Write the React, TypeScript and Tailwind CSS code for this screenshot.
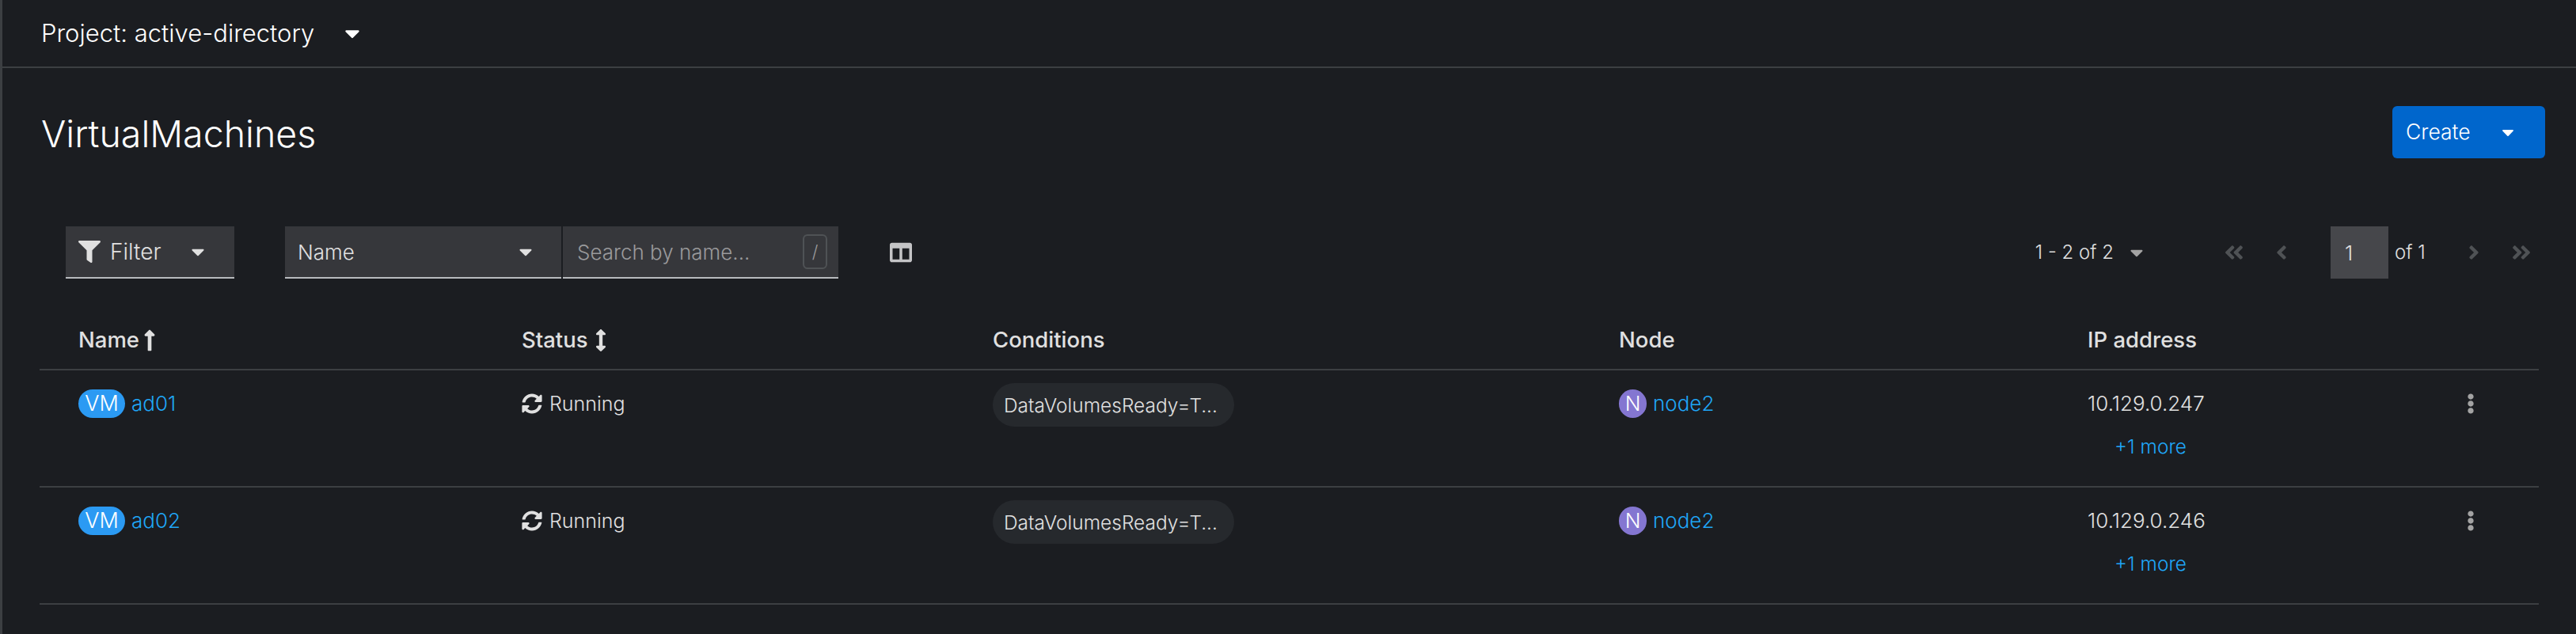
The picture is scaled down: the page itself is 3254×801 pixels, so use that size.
import { FaArrowsAltV, FaCaretDown, FaAngleDoubleLeft, FaAngleDoubleRight, FaAngleLeft, FaAngleRight, FaColumns, FaEllipsisV, FaFilter, FaLongArrowAltUp, FaSyncAlt } from 'react-icons/fa';

const COLUMNS = 'grid grid-cols-[560px_595px_791px_592px_1fr]';

const VMS = [
  { name: 'ad01', ip: '10.129.0.247' },
  { name: 'ad02', ip: '10.129.0.246' },
];

function VmRow({ name, ip }: { name: string; ip: string }) {
  return (
    <div className={`${COLUMNS} h-[148px] border-b-2 border-[#3c3f42] text-[26px] font-light leading-[36px] text-[#e0e0e0]`}>
      <div className="flex items-start pl-[49px] pt-6">
        <span className="flex h-9 w-[59px] items-center justify-center rounded-[18px] bg-[#2b9af3] text-[27px] text-white">VM</span>
        <a className="ml-2 text-[#1fa7f8]">{name}</a>
      </div>
      <div className="flex items-start pl-[49px] pt-6">
        <FaSyncAlt className="mr-[9px] mt-[5px] size-[26px]" />
        <span className="text-[25px]">Running</span>
      </div>
      <div className="pl-[49px] pt-4">
        <span className="inline-block h-[55px] w-[305px] rounded-[28px] bg-[#26292d] pl-3.5 pt-2.5 text-[24.5px]">DataVolumesReady=T...</span>
      </div>
      <div className="flex items-start pl-[49px] pt-6">
        <span className="flex h-9 w-[35px] items-center justify-center rounded-full bg-[#8476d1] text-white">N</span>
        <a className="ml-2 text-[#1fa7f8]">node2</a>
      </div>
      <div className="relative pl-[49px] pt-6">
        <div>{ip}</div>
        <a className="mt-[18px] ml-[34px] block text-[24.5px] text-[#1fa7f8]">+1 more</a>
        <FaEllipsisV className="absolute left-[520px] top-[29px] size-[26px] text-[#a3a3a3]" />
      </div>
    </div>
  );
}

export default function App() {
  return (
    <div className="h-[801px] border-l-[3px] border-[#3c3f42] bg-[#1b1d21] font-['Inter',sans-serif] text-[#e0e0e0]">
      <div className="flex h-[86px] items-center border-b-2 border-[#3c3f42] pl-[49px] text-[31px] font-light text-white">
        <span>Project: active-directory</span>
        <FaCaretDown className="ml-[33px] size-[30px]" />
      </div>

      <div className="flex items-center justify-between pt-12 pl-[49px] pr-[39px]">
        <h1 className="pt-1 text-[46.5px] font-light leading-none text-white">VirtualMachines</h1>
        <button className="flex h-[66px] w-[193px] items-center rounded-[6px] bg-[#0066cc] pl-[17px] text-[26.5px] font-light text-white">
          Create
          <FaCaretDown className="ml-[35px] size-6" />
        </button>
      </div>

      <div className="mt-[86px] flex h-[66px] items-center pl-[80px] pr-[39px] text-[26px] font-light text-[#e0e0e0]">
        <div className="flex h-full w-[213px] items-center border-b-2 border-[#b8bbbe] bg-[#36373b] pl-4">
          <FaFilter className="size-[28px]" />
          <span className="ml-3 text-[28px]">Filter</span>
          <FaCaretDown className="ml-[34px] size-[26px]" />
        </div>
        <div className="ml-16 flex h-full w-[349px] items-center justify-between border-b-2 border-[#b8bbbe] bg-[#36373b] pl-4 pr-8">
          <span>Name</span>
          <FaCaretDown className="size-[26px]" />
        </div>
        <div className="ml-0.5 flex h-full w-[348px] items-center justify-between border-b-2 border-[#b8bbbe] bg-[#36373b] pl-[18px] pr-3.5 text-[#9a9a9c]">
          <span className="text-[26px]">Search by name...</span>
          <span className="flex h-11 w-[31px] items-center justify-center rounded-md border-2 border-[#4f5255] text-[22px]">/</span>
        </div>
        <FaColumns className="ml-[65px] size-7 text-[#c4c4c6]" />

        <div className="ml-auto mr-4 flex items-center">
          <span className="text-[24px]">1 - 2 of 2</span>
          <FaCaretDown className="ml-4 size-[26px] text-[#a3a3a3]" />
          <FaAngleDoubleLeft className="ml-24 size-7 text-[#4f5255]" />
          <FaAngleLeft className="ml-8 size-7 text-[#4f5255]" />
          <span className="ml-12 flex h-[66px] w-[73px] items-center bg-[#46474b] pl-[18px]">1</span>
          <span className="ml-2 w-[38px] whitespace-nowrap text-[24px]">of 1</span>
          <FaAngleRight className="ml-12 size-7 text-[#4f5255]" />
          <FaAngleDoubleRight className="ml-8 size-7 text-[#4f5255]" />
        </div>
      </div>

      <div className="mx-[47px] mt-[14px]">
        <div className={`${COLUMNS} h-[102px] items-center border-b-2 border-[#3c3f42] pt-[28px] text-[27.5px] font-medium text-[#e0e0e0]`}>
          <div className="flex items-center pl-[49px]">Name<FaLongArrowAltUp className="-ml-0.5 size-[30px]" /></div>
          <div className="flex items-center pl-[49px]">Status<FaArrowsAltV className="ml-0.5 size-7" /></div>
          <div className="pl-[49px]">Conditions</div>
          <div className="pl-[49px]">Node</div>
          <div className="pl-[49px]">IP address</div>
        </div>
        {VMS.map(vm => (
          <VmRow key={vm.name} name={vm.name} ip={vm.ip} />
        ))}
      </div>
    </div>
  );
}
